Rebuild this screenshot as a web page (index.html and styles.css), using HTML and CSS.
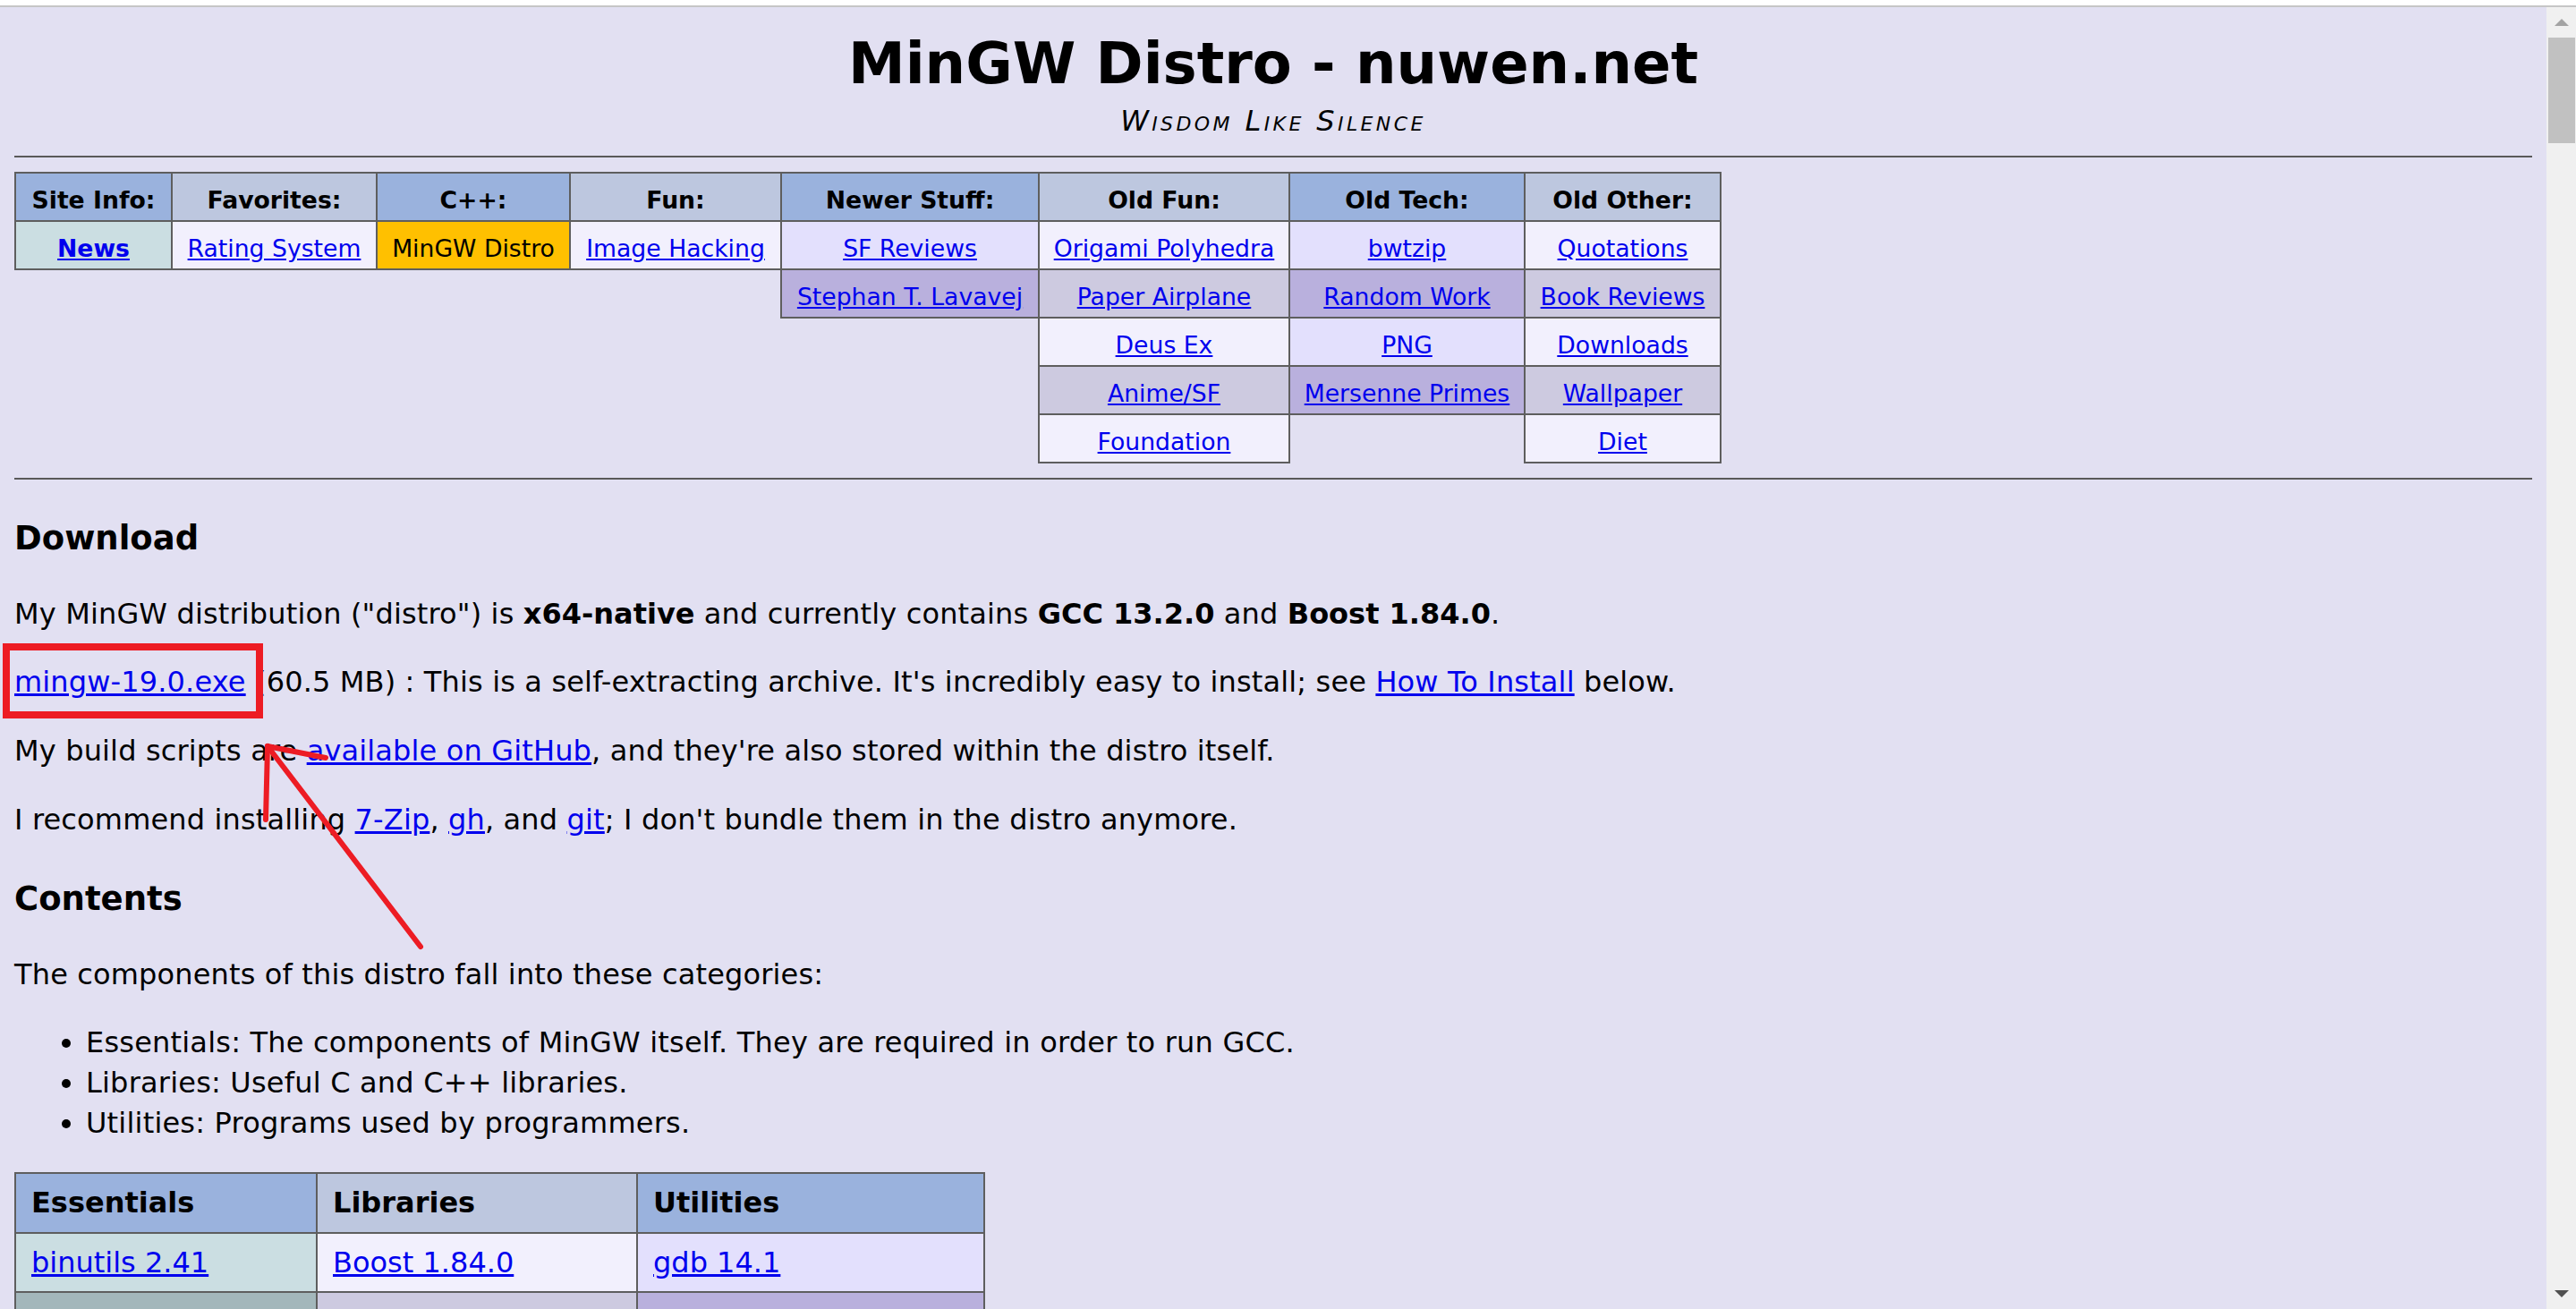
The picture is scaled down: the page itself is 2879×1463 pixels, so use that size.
FILE: index.html
```html
<!DOCTYPE html>
<html lang="en">
<head>
<meta charset="utf-8">
<title>MinGW Distro - nuwen.net</title>
<link rel="stylesheet" href="styles.css">
</head>
<body>
<div class="chrome-top"></div>
<div class="viewport">
  <main class="page">
    <h1 class="title">MinGW Distro - nuwen.net</h1>
    <p class="tagline">Wisdom Like Silence</p>
    <hr class="rule">
    <table class="nav">
      <colgroup>
        <col class="c1"><col class="c2"><col class="c3"><col class="c4"><col class="c5"><col class="c6"><col class="c7"><col class="c8">
      </colgroup>
      <tr>
        <th class="hb">Site Info:</th>
        <th class="hg">Favorites:</th>
        <th class="hb">C++:</th>
        <th class="hg">Fun:</th>
        <th class="hb">Newer Stuff:</th>
        <th class="hg">Old Fun:</th>
        <th class="hb">Old Tech:</th>
        <th class="hg">Old Other:</th>
      </tr>
      <tr>
        <td class="teal"><a href="#" class="strong">News</a></td>
        <td class="gl"><a href="#">Rating System</a></td>
        <td class="gold">MinGW Distro</td>
        <td class="gl"><a href="#">Image Hacking</a></td>
        <td class="pl"><a href="#">SF Reviews</a></td>
        <td class="gl"><a href="#">Origami Polyhedra</a></td>
        <td class="pl"><a href="#">bwtzip</a></td>
        <td class="gl"><a href="#">Quotations</a></td>
      </tr>
      <tr>
        <td class="e"></td><td class="e"></td><td class="e"></td><td class="e"></td>
        <td class="pd"><a href="#">Stephan T. Lavavej</a></td>
        <td class="gd"><a href="#">Paper Airplane</a></td>
        <td class="pd"><a href="#">Random Work</a></td>
        <td class="gd"><a href="#">Book Reviews</a></td>
      </tr>
      <tr>
        <td class="e"></td><td class="e"></td><td class="e"></td><td class="e"></td><td class="e"></td>
        <td class="gl"><a href="#">Deus Ex</a></td>
        <td class="pl"><a href="#">PNG</a></td>
        <td class="gl"><a href="#">Downloads</a></td>
      </tr>
      <tr>
        <td class="e"></td><td class="e"></td><td class="e"></td><td class="e"></td><td class="e"></td>
        <td class="gd"><a href="#">Anime/SF</a></td>
        <td class="pd"><a href="#">Mersenne Primes</a></td>
        <td class="gd"><a href="#">Wallpaper</a></td>
      </tr>
      <tr>
        <td class="e"></td><td class="e"></td><td class="e"></td><td class="e"></td><td class="e"></td>
        <td class="gl"><a href="#">Foundation</a></td>
        <td class="e"></td>
        <td class="gl"><a href="#">Diet</a></td>
      </tr>
    </table>
    <hr class="rule">

    <h2 class="section">Download</h2>
    <p>My MinGW distribution ("distro") is <b>x64-native</b> and currently contains <b>GCC 13.2.0</b> and <b>Boost 1.84.0</b>.</p>
    <p><a href="#">mingw-19.0.exe</a> (60.5 MB) : This is a self-extracting archive. It's incredibly easy to install; see <a href="#">How To Install</a> below.</p>
    <p>My build scripts are <a href="#">available on GitHub</a>, and they're also stored within the distro itself.</p>
    <p>I recommend installing <a href="#">7-Zip</a>, <a href="#">gh</a>, and <a href="#">git</a>; I don't bundle them in the distro anymore.</p>

    <h2 class="section">Contents</h2>
    <p>The components of this distro fall into these categories:</p>
    <ul class="cats">
      <li>Essentials: The components of MinGW itself. They are required in order to run GCC.</li>
      <li>Libraries: Useful C and C++ libraries.</li>
      <li>Utilities: Programs used by programmers.</li>
    </ul>
    <table class="contents">
      <colgroup><col class="k1"><col class="k2"><col class="k3"></colgroup>
      <tr><th class="hb">Essentials</th><th class="hg">Libraries</th><th class="hb">Utilities</th></tr>
      <tr><td class="teal"><a href="#">binutils 2.41</a></td><td class="gl"><a href="#">Boost 1.84.0</a></td><td class="pl"><a href="#">gdb 14.1</a></td></tr>
      <tr><td class="tealdark"><a href="#">GCC 13.2.0</a></td><td class="gd"><a href="#">FreeType 2.13.2</a></td><td class="pd"><a href="#">grep 3.11</a></td></tr>
    </table>
  </main>
  <div class="scrollbar">
    <div class="sb-up"><span class="tri-up"></span></div>
    <div class="sb-thumb"></div>
    <div class="sb-track"></div>
    <div class="sb-down"><span class="tri-down"></span></div>
  </div>
</div>
<svg class="annot" width="2879" height="1463" viewBox="0 0 2879 1463" aria-hidden="true">
  <rect x="7" y="723" width="283" height="76" fill="none" stroke="#ed1c24" stroke-width="8"/>
  <g stroke="#ed1c24" stroke-width="6" stroke-linecap="round" fill="none">
    <line x1="470" y1="1058" x2="299" y2="834"/>
    <line x1="299" y1="834" x2="297" y2="916"/>
    <line x1="299" y1="834" x2="364" y2="847"/>
  </g>
</svg>
</body>
</html>
```
FILE: styles.css
```css
html, body {
  margin: 0;
  height: 100%;
  overflow: hidden;
}

body {
  position: relative;
  background: #ffffff;
  font-family: "DejaVu Sans", Verdana, sans-serif;
  color: #000;
}

.chrome-top {
  height: 6px;
  background: #ffffff;
  border-bottom: 2px solid #c6c6c6;
}

.viewport {
  display: flex;
  height: calc(100% - 8px);
  background: #e2e0f2;
}

.page {
  flex: 1;
  min-width: 0;
  padding: 16px 16px 0;
  overflow: hidden;
  font-size: 32px;
  line-height: 44.8px;
}

.title {
  margin: 6px 0 0;
  font-size: 64px;
  line-height: 83px;
  font-weight: bold;
  text-align: center;
}

.tagline {
  margin: 0;
  text-align: center;
  font-style: italic;
  font-variant: small-caps;
  letter-spacing: 3.4px;
}

.rule {
  border: 0;
  height: 2px;
  background: #595959;
  margin: 16px 0;
}

a {
  color: #0000ee;
  text-decoration: underline;
}

a.strong {
  font-weight: bold;
}

/* nav table */
.nav {
  border-collapse: collapse;
  table-layout: fixed;
  width: 1906px;
  font-size: 26.67px;
  line-height: 38px;
}

.nav col.c1 { width: 175px; }
.nav col.c2 { width: 229px; }
.nav col.c3 { width: 216px; }
.nav col.c4 { width: 236px; }
.nav col.c5 { width: 288px; }
.nav col.c6 { width: 280px; }
.nav col.c7 { width: 263px; }
.nav col.c8 { width: 219px; }

.nav th,
.nav td {
  border: 2px solid #5e5e5e;
  padding: 11px 0 3px;
  text-align: center;
  white-space: nowrap;
  overflow: hidden;
}

.nav th {
  font-weight: bold;
}

.nav td.e {
  border: none;
  background: transparent;
}

.hb { background: #9ab2dd; }
.hg { background: #bdc7df; }
.teal { background: #cbdee2; }
.tealdark { background: #a3b7bb; }
.gl { background: #f2f0fd; }
.gd { background: #cdcae0; }
.pl { background: #e3e0fd; }
.pd { background: #b9b0dd; }
.gold { background: #ffc000; }

/* sections */
.section {
  font-size: 37px;
  line-height: 51.8px;
  font-weight: bold;
  margin: 40px 0 36px;
}

.page p {
  margin: 32px 0;
  letter-spacing: 0.15px;
}

.page p b {
  letter-spacing: 0;
}

.page p.tagline {
  margin: 0;
  letter-spacing: 3.4px;
}

.cats {
  margin: 32px 0;
  padding-left: 80px;
  letter-spacing: 0.2px;
}

/* contents table */
.contents {
  border-collapse: collapse;
  table-layout: fixed;
  width: 1083px;
}

.contents col.k1 { width: 337px; }
.contents col.k2 { width: 358px; }
.contents col.k3 { width: 388px; }

.contents th,
.contents td {
  border: 2px solid #5e5e5e;
  padding: 10px 17px;
  text-align: left;
  white-space: nowrap;
}

.contents th {
  font-weight: bold;
}

/* fake scrollbar */
.scrollbar {
  width: 33px;
  flex: 0 0 33px;
  background: #f0f0f0;
  display: flex;
  flex-direction: column;
}

.sb-up,
.sb-down {
  height: 34px;
  display: flex;
  justify-content: center;
  align-items: center;
}

.tri-up {
  width: 0;
  height: 0;
  border-left: 8px solid transparent;
  border-right: 8px solid transparent;
  border-bottom: 8px solid #a3a3a3;
}

.tri-down {
  width: 0;
  height: 0;
  border-left: 8px solid transparent;
  border-right: 8px solid transparent;
  border-top: 8px solid #505050;
}

.sb-thumb {
  height: 118px;
  margin: 0 1px 0 2px;
  background: #c1c1c1;
}

.sb-track {
  flex: 1;
}

.annot {
  position: absolute;
  left: 0;
  top: 0;
  pointer-events: none;
}
```
